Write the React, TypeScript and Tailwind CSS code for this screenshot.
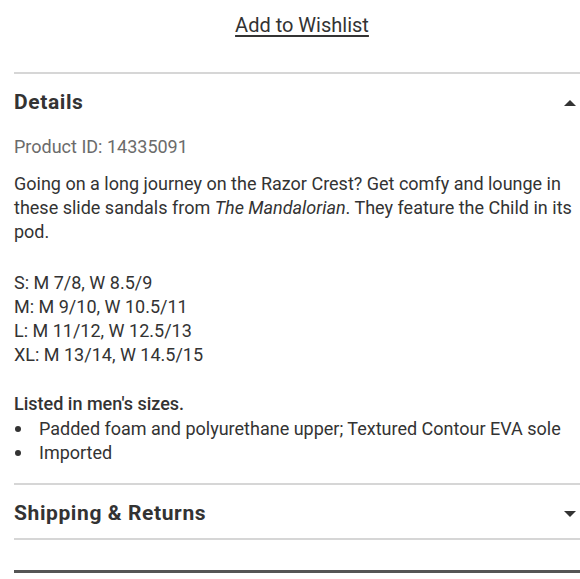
import React from "react";

export default function App() {
  return (
    <div className="w-[580px] h-[579px] overflow-hidden bg-white" style={{ fontFamily: "Roboto, 'Liberation Sans', sans-serif" }}>
      <div className="ml-[14px] w-[576px] text-[#333]">
        <div className="flex justify-center pt-[11px] h-[72px]">
          <a className="text-[20px] leading-[28px] text-[#333] underline underline-offset-[3px]">Add to Wishlist</a>
        </div>
        <div className="border-t-2 border-[#d6d6d6]">
          <div className="flex items-center justify-between h-[58px] pr-[14px]">
            <h2 className="text-[21px] font-bold tracking-[0.6px] text-[#333]">Details</h2>
            <svg width="12" height="6" viewBox="0 0 12 6"><path d="M0 6 L6 0 L12 6 Z" fill="#333" /></svg>
          </div>
          <div className="text-[18px] leading-[24px] pt-[3px] pb-[18px] pr-[14px]">
            <p className="text-[#6b6b6b] mb-[13px]">Product ID: 14335091</p>
            <p>
              Going on a long journey on the Razor Crest? Get comfy and lounge in these slide sandals from <i>The Mandalorian</i>. They feature the Child in its pod.
            </p>
            <p className="mt-[27px]">
              S: M 7/8, W 8.5/9<br />
              M: M 9/10, W 10.5/11<br />
              L: M 11/12, W 12.5/13<br />
              XL: M 13/14, W 14.5/15
            </p>
            <p className="mt-[25px] font-medium">Listed in men's sizes.</p>
            <ul className="pl-0 mt-[1px]">
              <li className="flex items-center"><span className="w-[25px] flex"><span className="w-[6px] h-[6px] rounded-full bg-[#333] ml-[1px]"></span></span>Padded foam and polyurethane upper; Textured Contour EVA sole</li>
              <li className="flex items-center"><span className="w-[25px] flex"><span className="w-[6px] h-[6px] rounded-full bg-[#333] ml-[1px]"></span></span>Imported</li>
            </ul>
          </div>
        </div>
        <div className="border-t-2 border-[#d6d6d6]">
          <div className="flex items-center justify-between h-[53px] pt-[4px] pr-[14px]">
            <h2 className="text-[21px] font-bold tracking-[0.6px] text-[#333]">Shipping &amp; Returns</h2>
            <svg width="12" height="6" viewBox="0 0 12 6"><path d="M0 0 L12 0 L6 6 Z" fill="#333" /></svg>
          </div>
        </div>
        <div className="border-t-2 border-[#d6d6d6] h-[32px]"></div>
        <div className="border-t-[3px] border-[#555]"></div>
      </div>
    </div>
  );
}
